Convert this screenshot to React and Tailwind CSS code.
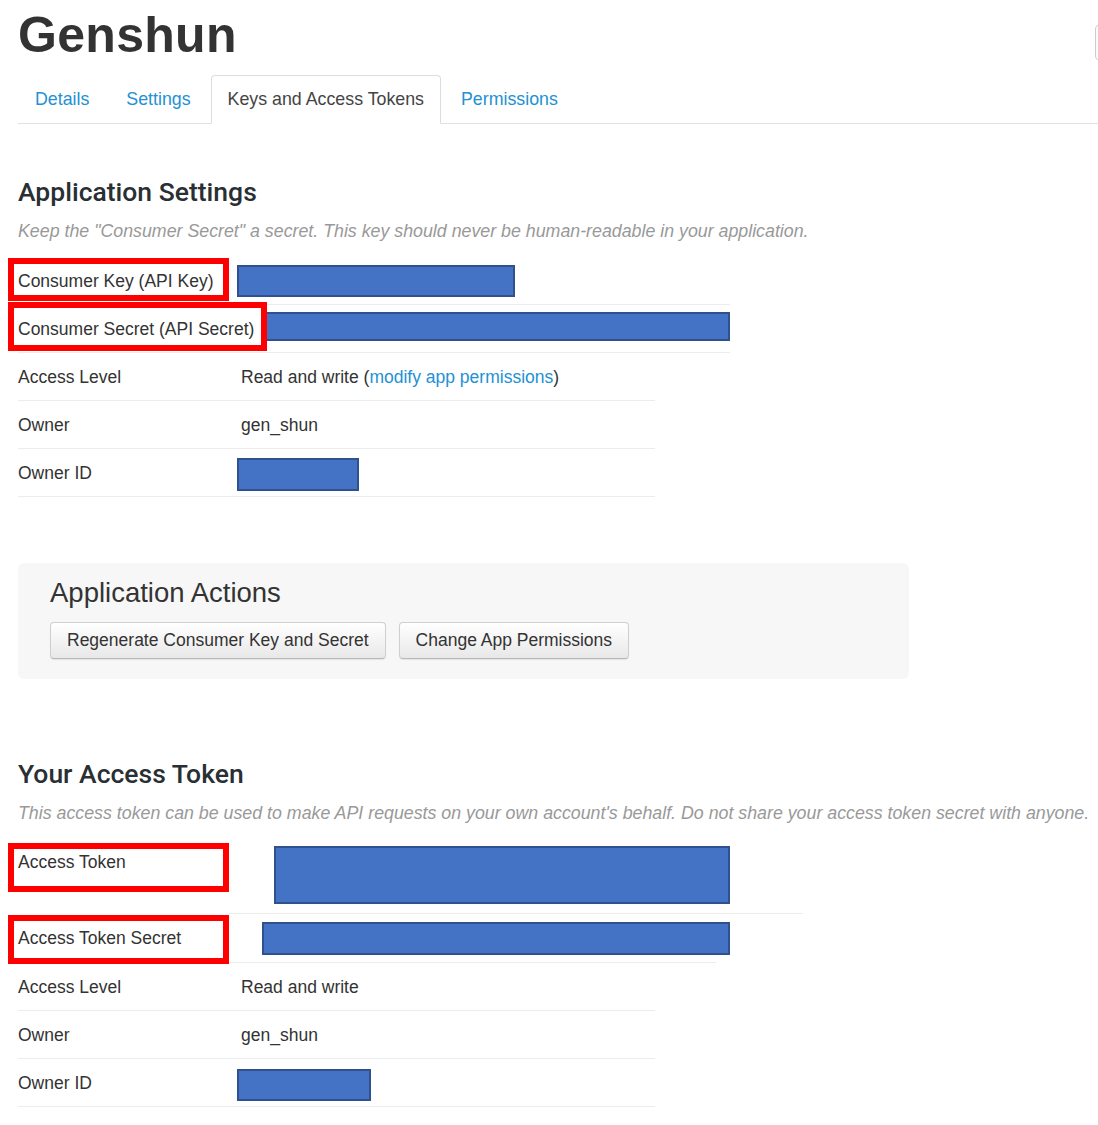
import React from 'react';

const Blue = ({ className }) => (
  <div className={`bg-[#4472c4] border-2 border-[#2f528f] ${className}`}></div>
);

export default function App() {
  const tabs = [
    { name: 'Details', active: false },
    { name: 'Settings', active: false },
    { name: 'Keys and Access Tokens', active: true },
    { name: 'Permissions', active: false },
  ];

  return (
    <div className="w-[1098px] min-h-[1125px] overflow-hidden bg-white pl-[18px] text-[#333] [font-family:'Liberation_Sans',Arial,sans-serif]">
      {/* Header */}
      <div className="flex justify-between items-start h-[60px]">
        <h1 className="pt-[10px] text-[50px] leading-[50px] font-bold text-[#333] tracking-[0.3px]">Genshun</h1>
        <div className="mt-[24px] -mr-[37px] w-[40px] h-[37px] rounded-[5px] border border-[#ccc] bg-[#fafafa]"></div>
      </div>

      {/* Tabs */}
      <div className="mt-[15px] flex border-b border-[#e1e1e1]">
        {tabs.map((t) => (
          <div
            key={t.name}
            className={`-mb-px mr-[3px] h-[49px] px-[16px] flex items-center text-[17.8px] ${
              t.active
                ? 'border border-[#ddd] border-b-white rounded-t-[4px] bg-white text-[#444]'
                : 'border border-transparent text-[#2391d3]'
            }`}
          >
            {t.name}
          </div>
        ))}
      </div>

      {/* Application Settings */}
      <h2 className="mt-[50px] text-[26.5px] leading-[36px] font-medium text-[#292f33] [font-family:Roboto,sans-serif]">Application Settings</h2>
      <p className="mt-[9px] text-[17.8px] leading-[24px] italic text-[#999] whitespace-nowrap">
        Keep the "Consumer Secret" a secret. This key should never be human-readable in your application.
      </p>

      <div className="mt-[14px] text-[17.5px]">
        <div className="relative flex items-center h-12 w-[712px] border-b border-[#ececec] pt-px">
          <div className="absolute -left-[10px] top-[1px] w-[221px] h-[43px] border-[6px] border-[#ff0000] bg-white"></div>
          <div className="relative w-[219px] shrink-0">Consumer Key (API Key)</div>
          <Blue className="w-[278px] h-[32px]" />
        </div>
        <div className="relative flex items-start h-12 w-[712px] border-b border-[#ececec]">
          <Blue className="ml-[232px] mt-[7px] w-[480px] h-[29px]" />
          <div className="absolute -left-[10px] -top-[3px] w-[259px] h-[49px] border-[6px] border-[#ff0000] bg-white"></div>
          <div className="absolute left-0 top-[12px] leading-[24px] whitespace-nowrap">Consumer Secret (API Secret)</div>
        </div>
        <div className="flex items-center h-12 w-[637px] border-b border-[#ececec] pt-px">
          <div className="w-[219px] shrink-0">Access Level</div>
          <div className="pl-[4px]">
            Read and write (<span className="text-[#2391d3]">modify app permissions</span>)
          </div>
        </div>
        <div className="flex items-center h-12 w-[637px] border-b border-[#ececec] pt-px">
          <div className="w-[219px] shrink-0">Owner</div>
          <div className="pl-[4px]">gen_shun</div>
        </div>
        <div className="flex items-center h-12 w-[637px] border-b border-[#ececec] pt-px">
          <div className="w-[219px] shrink-0">Owner ID</div>
          <Blue className="mt-[3px] w-[122px] h-[33px]" />
        </div>
      </div>

      {/* Application Actions */}
      <div className="mt-[66px] w-[891px] rounded-[6px] bg-[#f7f7f7] pl-[32px] pt-[14px] pb-[20px]">
        <h3 className="text-[27.5px] leading-[32px] text-[#333]">Application Actions</h3>
        <div className="mt-[13px] flex gap-[13px]">
          <button className="h-[37px] px-[16px] rounded-[4px] border border-[#cfcfcf] border-b-[#b8b8b8] bg-linear-to-b from-white to-[#e8e8e8] shadow-[0_1px_1px_rgba(0,0,0,0.08)] text-[17.5px] text-[#333]">
            Regenerate Consumer Key and Secret
          </button>
          <button className="h-[37px] px-[16px] rounded-[4px] border border-[#cfcfcf] border-b-[#b8b8b8] bg-linear-to-b from-white to-[#e8e8e8] shadow-[0_1px_1px_rgba(0,0,0,0.08)] text-[17.5px] text-[#333]">
            Change App Permissions
          </button>
        </div>
      </div>

      {/* Your Access Token */}
      <h2 className="mt-[77px] text-[26.5px] leading-[36px] font-medium text-[#292f33] [font-family:Roboto,sans-serif]">Your Access Token</h2>
      <p className="mt-[9px] text-[17.8px] leading-[24px] italic text-[#999] whitespace-nowrap">
        This access token can be used to make API requests on your own account's behalf. Do not share your access token secret with anyone.
      </p>

      <div className="mt-[13px] text-[17.5px]">
        <div className="relative flex items-start h-[75px]">
          <div className="absolute -left-[10px] top-[5px] w-[221px] h-[49px] border-[6px] border-[#ff0000] bg-white"></div>
          <div className="relative w-[219px] shrink-0 pt-[12px] leading-[24px]">Access Token</div>
          <Blue className="ml-[37px] mt-[8px] w-[456px] h-[58px]" />
        </div>
        <div className="ml-[211px] w-[574px] h-px bg-[#ececec]"></div>
        <div className="relative flex items-center h-12">
          <div className="absolute -left-[10px] top-[1px] w-[221px] h-[49px] border-[6px] border-[#ff0000] bg-white z-10"></div>
          <div className="relative z-20 w-[219px] shrink-0">Access Token Secret</div>
          <Blue className="ml-[25px] w-[468px] h-[33px]" />
        </div>
        <div className="ml-[211px] w-[487px] h-px bg-[#ececec]"></div>
        <div className="flex items-center h-12 w-[637px] border-b border-[#ececec] pt-px">
          <div className="w-[219px] shrink-0">Access Level</div>
          <div className="pl-[4px]">Read and write</div>
        </div>
        <div className="flex items-center h-12 w-[637px] border-b border-[#ececec] pt-px">
          <div className="w-[219px] shrink-0">Owner</div>
          <div className="pl-[4px]">gen_shun</div>
        </div>
        <div className="flex items-center h-12 w-[637px] border-b border-[#ececec] pt-px">
          <div className="w-[219px] shrink-0">Owner ID</div>
          <Blue className="mt-[3px] w-[134px] h-[32px]" />
        </div>
      </div>
    </div>
  );
}
